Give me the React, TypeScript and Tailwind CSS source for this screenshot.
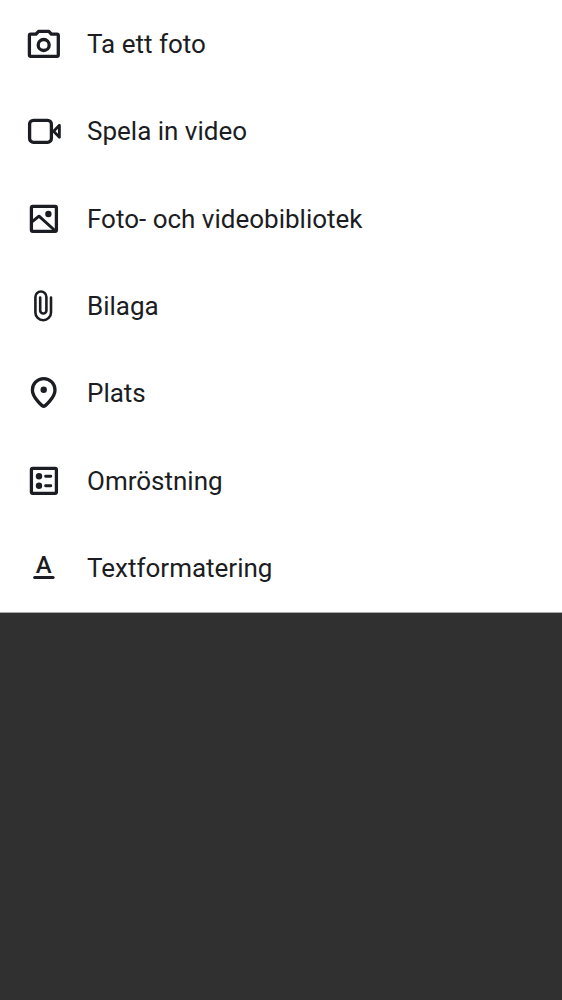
import type { ReactNode } from "react";

function Icon({ children, width = 3.3 }: { children: ReactNode; width?: number }) {
  return (
    <svg
      viewBox="0 0 36 36"
      className="size-9 shrink-0"
      fill="none"
      stroke="currentColor"
      strokeWidth={width}
      strokeLinecap="round"
      strokeLinejoin="round"
      aria-hidden="true"
    >
      {children}
    </svg>
  );
}

const items: { label: string; icon: ReactNode }[] = [
  {
    label: "Ta ett foto",
    icon: (
      <Icon>
        <path d="M4.7 8.2H10L12.6 5.4H22.8L25.4 8.2H31Q32.3 8.2 32.3 9.5V29Q32.3 30.3 31 30.3H4.7Q3.4 30.3 3.4 29V9.5Q3.4 8.2 4.7 8.2Z" />
        <circle cx="17.7" cy="19" r="5.5" />
      </Icon>
    ),
  },
  {
    label: "Spela in video",
    icon: (
      <Icon>
        <rect x="3.6" y="7.3" width="21.8" height="22" rx="3.8" />
        <path d="M27.6 18.3L33.4 12.3V24.3Z" strokeWidth="2.8" />
      </Icon>
    ),
  },
  {
    label: "Foto- och videobibliotek",
    icon: (
      <Icon>
        <rect x="5.4" y="5.4" width="25" height="25" rx="1.4" />
        <path d="M5.6 21.2L13 15.2L29.4 30" strokeWidth="3" />
        <circle cx="22.4" cy="13" r="3.2" fill="currentColor" stroke="none" />
      </Icon>
    ),
  },
  {
    label: "Bilaga",
    icon: (
      <Icon width={2.6}>
        <path d="M25 9.5V24.4A7.8 7.8 0 0 1 9.4 24.4V9A5.5 5.5 0 0 1 20.4 9V22.4A3.1 3.1 0 0 1 14.2 22.4V9.5" />
      </Icon>
    ),
  },
  {
    label: "Plats",
    icon: (
      <Icon>
        <path d="M17.7 31.4C16.8 31.4 6.4 22.7 6.4 14.9A11.3 11.3 0 0 1 29 14.9C29 22.7 18.6 31.4 17.7 31.4Z" />
        <circle cx="17.7" cy="14.8" r="3.2" fill="currentColor" stroke="none" />
      </Icon>
    ),
  },
  {
    label: "Omröstning",
    icon: (
      <Icon>
        <rect x="5.4" y="5.3" width="25" height="25" rx="1.4" />
        <circle cx="13" cy="13.2" r="3.2" fill="currentColor" stroke="none" />
        <circle cx="13" cy="22.7" r="3.2" fill="currentColor" stroke="none" />
        <path d="M19.6 13.2H24.8M19.6 22.7H24.8" strokeWidth="2.9" />
      </Icon>
    ),
  },
  {
    label: "Textformatering",
    icon: (
      <Icon>
        <text
          x="17.6"
          y="22.6"
          textAnchor="middle"
          fill="currentColor"
          stroke="none"
          className="font-['Roboto',sans-serif] text-[24px] font-medium"
        >
          A
        </text>
        <path d="M8.6 27.4H27.1" strokeWidth="3" />
      </Icon>
    ),
  },
];

export default function App() {
  return (
    <main className="min-h-screen bg-[#303030] font-['Roboto',sans-serif]">
      <ul className="grid min-h-[613px] grid-rows-7 border-b border-[#a8a8a8] bg-white text-[#1b1d22]">
        {items.map(({ label, icon }) => (
          <li key={label} className="grid">
            <button type="button" className="flex items-center gap-[25px] px-[26px] text-left text-[26px] leading-8">
              {icon}
              <span>{label}</span>
            </button>
          </li>
        ))}
      </ul>
    </main>
  );
}
